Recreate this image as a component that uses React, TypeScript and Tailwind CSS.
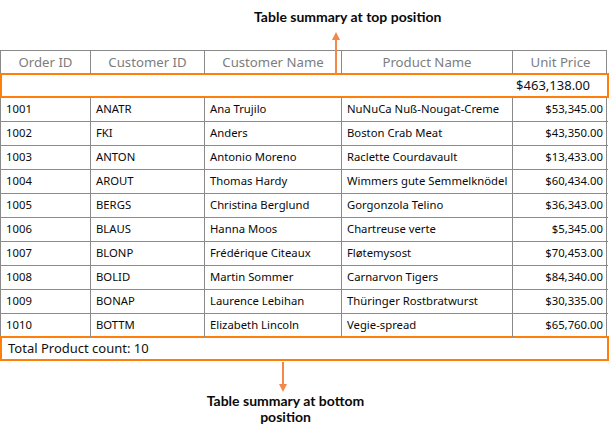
const rows = [
  ["1001", "ANATR", "Ana Trujilo", "NuNuCa Nuß-Nougat-Creme", "$53,345.00"],
  ["1002", "FKI", "Anders", "Boston Crab Meat", "$43,350.00"],
  ["1003", "ANTON", "Antonio Moreno", "Raclette Courdavault", "$13,433.00"],
  ["1004", "AROUT", "Thomas Hardy", "Wimmers gute Semmelknödel", "$60,434.00"],
  ["1005", "BERGS", "Christina Berglund", "Gorgonzola Telino", "$36,343.00"],
  ["1006", "BLAUS", "Hanna Moos", "Chartreuse verte", "$5,345.00"],
  ["1007", "BLONP", "Frédérique Citeaux", "Fløtemysost", "$70,453.00"],
  ["1008", "BOLID", "Martin Sommer", "Carnarvon Tigers", "$84,340.00"],
  ["1009", "BONAP", "Laurence Lebihan", "Thüringer Rostbratwurst", "$30,335.00"],
  ["1010", "BOTTM", "Elizabeth Lincoln", "Vegie-spread", "$65,760.00"],
];

const headers = ["Order ID", "Customer ID", "Customer Name", "Product Name", "Unit Price"];
const cols = "grid grid-cols-[90px_114px_137px_171px_95px] w-[607px]";

export default function App() {
  return (
    <div className="relative w-[609px] h-[444px] bg-white overflow-hidden font-['Noto_Sans',sans-serif]">
      {/* top caption */}
      <div className="h-[50px] pl-[254px] pt-[6px] font-['Lato',sans-serif] font-bold text-[14px] text-[#0a0a0a]">
        Table summary at top position
      </div>

      {/* header */}
      <div className={`${cols} h-[24px] border-t border-l border-r border-[#8a8a8a]`}>
        {headers.map((h, i) => (
          <div
            key={h}
            className={`flex items-center justify-center text-[13.2px] text-[#7d7d7d] ${i < 4 ? "border-r border-[#8a8a8a]" : ""}`}
          >
            {h}
          </div>
        ))}
      </div>

      {/* top summary */}
      <div className="w-[609px] h-[25px] -mt-px border-2 border-[#ff7f0a] flex items-center justify-end pr-[17px] text-[13px] text-[#111]">
        $463,138.00
      </div>

      {/* data rows */}
      <div className="border-l border-r border-[#8a8a8a] w-[607px]">
        {rows.map((r) => (
          <div key={r[0]} className={`${cols} h-[24px] border-b border-[#8a8a8a]`}>
            {r.map((c, i) => (
              <div
                key={i}
                className={`flex items-center text-[11.3px] text-[#0a0a0a] whitespace-nowrap overflow-hidden ${
                  i === 4 ? "justify-end pr-[5px]" : "pl-[5px]"
                } ${i < 4 ? "border-r border-[#8a8a8a]" : ""}`}
              >
                {c}
              </div>
            ))}
          </div>
        ))}
      </div>

      {/* bottom summary */}
      <div className="w-[609px] h-[25px] -mt-[2px] border-2 border-[#ff7f0a] flex items-center pl-[6px] text-[13px] text-[#111]">
        Total Product count: 10
      </div>

      {/* bottom caption */}
      <div className="pt-[32px] w-[571px] text-center font-['Lato',sans-serif] font-bold text-[14px] leading-[16px] text-[#0a0a0a]">
        <div>Table summary at bottom</div>
        <div>position</div>
      </div>

      {/* arrows */}
      <svg className="absolute left-[330px] top-[31px]" width="12" height="43" viewBox="0 0 12 43">
        <path d="M6 8 V43" stroke="#f4884a" strokeWidth="2" />
        <path d="M2 9 L6 1 L10 9 Z" fill="#f4884a" />
      </svg>
      <svg className="absolute left-[277px] top-[362px]" width="12" height="31" viewBox="0 0 12 31">
        <path d="M6 0 V23" stroke="#f4884a" strokeWidth="2" />
        <path d="M2 22 L6 30 L10 22 Z" fill="#f4884a" />
      </svg>
    </div>
  );
}
